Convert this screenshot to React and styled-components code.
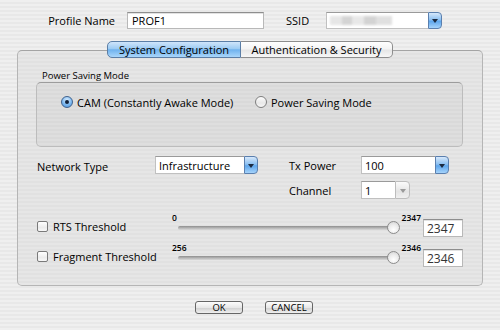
import React from "react";
import styled, { createGlobalStyle, css } from "styled-components";

const FONT = `"Open Sans", "DejaVu Sans", sans-serif`;

const Global = createGlobalStyle`
  html, body { margin: 0; padding: 0; }
  body {
    width: 500px; height: 330px; overflow: hidden;
    font-family: ${FONT};
    font-size: 11px;
    color: #000;
  }
`;

const Window = styled.div`
  width: 500px;
  height: 330px;
  box-sizing: border-box;
  display: flex;
  flex-direction: column;
  background: repeating-linear-gradient(to bottom, #efefef 0 2px, #e8e8e8 2px 4px);
`;

const Header = styled.div`
  display: flex;
  align-items: center;
  height: 17px;
  margin-top: 12px;
  padding-left: 40px;
`;

const Label = styled.span`
  display: inline-block;
  width: ${(p) => p.$w || "auto"};
  margin-left: ${(p) => p.$ml || "0"};
  padding-top: ${(p) => p.$pt || "0"};
  text-align: ${(p) => p.$align || "left"};
  white-space: nowrap;
  font-size: 11px;
  line-height: 14px;
`;

const TextField = styled.div`
  box-sizing: border-box;
  width: ${(p) => p.$w};
  height: ${(p) => p.$h || "17px"};
  margin-left: ${(p) => p.$ml || "0"};
  background: #fff;
  border: 1px solid #b8b8b8;
  border-top-color: #8e8e8e;
  box-shadow: inset 0 1px 0 #e2e2e2;
  display: flex;
  align-items: center;
  padding-left: ${(p) => p.$pl || "4px"};
  font-size: ${(p) => p.$fs || "11px"};
  color: ${(p) => p.$color || "#000"};
`;

const Select = styled.div`
  display: flex;
  width: ${(p) => p.$w};
  height: ${(p) => p.$h || "18px"};
  margin-left: ${(p) => p.$ml || "0"};
  box-sizing: border-box;
`;

const SelectField = styled.div`
  flex: 1;
  box-sizing: border-box;
  background: #fff;
  border: 1px solid #c0c0c0;
  border-right: none;
  border-top-color: #9a9a9a;
  display: flex;
  align-items: center;
  padding-left: 3px;
  font-size: 11px;
`;

const ArrowButton = styled.div`
  width: ${(p) => (p.$disabled ? "15px" : "14px")};
  box-sizing: border-box;
  border-radius: 0 4px 4px 0;
  display: flex;
  align-items: center;
  justify-content: center;
  ${(p) =>
    p.$disabled
      ? css`
          background: linear-gradient(#fbfbfb, #e4e4e4 60%, #f0f0f0);
          border: 1px solid #bdbdbd;
        `
      : css`
          background: linear-gradient(#d6e8fb 0%, #8cc0f1 45%, #5ea6ec 55%, #a5d3fb 100%);
          border: 1px solid #5a7fae;
        `}
  &::after {
    content: "";
    border-left: 3px solid transparent;
    border-right: 3px solid transparent;
    border-top: 4px solid ${(p) => (p.$disabled ? "#9a9a9a" : "#1b2a40")};
    margin-top: 1px;
  }
`;

const Blurred = styled.div`
  width: 62px;
  height: 9px;
  background: linear-gradient(90deg, #e4e4e4 0 20%, #d0d0d0 20% 35%, #e6e6e6 35% 55%, #cfcfcf 55% 75%, #dddddd 75%);
  filter: blur(1px);
  opacity: 0.9;
`;

const TabBar = styled.div`
  display: flex;
  justify-content: center;
  margin-top: 12px;
  height: 17px;
  position: relative;
  z-index: 1;
`;

const Tab = styled.div`
  box-sizing: border-box;
  width: ${(p) => p.$w};
  height: 17px;
  display: flex;
  align-items: center;
  justify-content: center;
  font-size: 11px;
  white-space: nowrap;
  ${(p) =>
    p.$first
      ? css`border-radius: 5px 0 0 5px;`
      : css`border-radius: 0 5px 5px 0; border-left: none !important;`}
  ${(p) =>
    p.$active
      ? css`
          background: linear-gradient(#cfe5fb 0%, #9ccbf3 45%, #6fb2ee 52%, #a9d6fb 100%);
          border: 1px solid #5b7ea6;
        `
      : css`
          background: linear-gradient(#ffffff 0%, #f4f4f4 45%, #e6e6e6 55%, #f7f7f7 100%);
          border: 1px solid #8d8d8d;
        `}
`;

const Panel = styled.div`
  box-sizing: border-box;
  margin: -8px 17px 0 17px;
  height: 236px;
  border: 1px solid #b5b5b5;
  border-top-color: #a4a4a4;
  border-radius: 5px;
  background: repeating-linear-gradient(to bottom, #e6e6e6 0 2px, #e1e1e1 2px 4px);
  padding: 0 19px 0 18px;
  display: flex;
  flex-direction: column;
`;

const GroupLabel = styled.div`
  margin-top: 19px;
  height: 12px;
  line-height: 12px;
  padding-left: 6px;
  font-size: 9.5px;
`;

const GroupBox = styled.div`
  box-sizing: border-box;
  margin-top: 0;
  height: 65px;
  border: 1px solid #bcbcbc;
  border-top-color: #9c9c9c;
  border-radius: 5px;
  background: repeating-linear-gradient(to bottom, #dedede 0 2px, #d9d9d9 2px 4px);
  display: flex;
  align-items: center;
  align-self: stretch;
  padding: 0 0 25px 24px;
`;

const RadioItem = styled.label`
  display: flex;
  align-items: center;
  gap: 4px;
  width: ${(p) => p.$w || "auto"};
  font-size: 11px;
  white-space: nowrap;
`;

const RadioDot = styled.span`
  width: 12px;
  height: 12px;
  border-radius: 50%;
  box-sizing: border-box;
  display: flex;
  align-items: center;
  justify-content: center;
  ${(p) =>
    p.$on
      ? css`
          background: radial-gradient(circle at 50% 30%, #d8ebfd 0%, #7db9f0 55%, #4b8fd9 100%);
          border: 1px solid #40618c;
          &::after {
            content: "";
            width: 4px;
            height: 4px;
            border-radius: 50%;
            background: #10203a;
          }
        `
      : css`
          background: linear-gradient(#fdfdfd, #e8e8e8 60%, #f6f6f6);
          border: 1px solid #7e7e7e;
        `}
`;

const FormRow = styled.div`
  display: flex;
  align-items: center;
  height: 18px;
  margin-top: ${(p) => p.$mt};
  padding-left: 1px;
`;

const ThresholdRow = styled.div`
  display: grid;
  grid-template-columns: 135px 251px 40px;
  height: 28px;
  margin-top: ${(p) => p.$mt};
  padding-left: 1px;
`;

const CheckLabel = styled.label`
  display: flex;
  align-items: center;
  gap: 5px;
  height: 12px;
  margin-top: 7px;
  font-size: 11px;
  white-space: nowrap;
`;

const CheckBox = styled.span`
  width: 11px;
  height: 11px;
  box-sizing: border-box;
  border: 1px solid #7a7a7a;
  border-radius: 2px;
  background: linear-gradient(#ffffff, #ececec 60%, #f8f8f8);
`;

const Slider = styled.div`
  display: flex;
  flex-direction: column;
`;

const SliderLabels = styled.div`
  display: flex;
  justify-content: space-between;
  padding-right: 2px;
  height: 10px;
  font-size: 8.5px;
  font-weight: 600;
  line-height: 10px;
`;

const Track = styled.div`
  position: relative;
  margin-left: 6px;
  width: 218px;
  height: 4px;
  margin-top: 3px;
  border-radius: 2px;
  background: linear-gradient(#8e8e8e, #bdbdbd 60%, #d8d8d8);
`;

const Thumb = styled.div`
  position: absolute;
  left: 209px;
  top: -5px;
  width: 13px;
  height: 13px;
  box-sizing: border-box;
  border-radius: 50%;
  border: 1px solid #8b8b8b;
  background: radial-gradient(circle at 50% 70%, #ffffff 0%, #ececec 50%, #cfcfcf 100%);
`;

const ValueBox = styled(TextField)`
  margin-top: 6px;
  font-size: 12px;
  color: #333;
`;

const ButtonBar = styled.div`
  display: flex;
  justify-content: center;
  gap: 22px;
  margin-top: 15px;
  padding-left: 8px;
`;

const Button = styled.button`
  width: 48px;
  height: 13px;
  padding: 0;
  box-sizing: border-box;
  border: 1px solid #666;
  border-radius: 3px;
  background: linear-gradient(#fdfdfd 0%, #e8e8e8 50%, #d2d2d2 55%, #efefef 100%);
  font-family: ${FONT};
  font-size: 9.5px;
  line-height: 11px;
  color: #000;
  display: flex;
  align-items: center;
  justify-content: center;
`;

function DropDown({ w, ml, value, disabled }) {
  return (
    <Select $w={w} $ml={ml}>
      <SelectField>{value}</SelectField>
      <ArrowButton $disabled={disabled} />
    </Select>
  );
}

function Threshold({ label, min, max, value, mt }) {
  return (
    <ThresholdRow $mt={mt}>
      <CheckLabel>
        <CheckBox />
        {label}
      </CheckLabel>
      <Slider>
        <SliderLabels>
          <span>{min}</span>
          <span>{max}</span>
        </SliderLabels>
        <Track>
          <Thumb />
        </Track>
      </Slider>
      <ValueBox $w="40px" $h="18px" $pl="3px">{value}</ValueBox>
    </ThresholdRow>
  );
}

export default function App() {
  return (
    <>
      <Global />
      <Window>
        <Header>
          <Label $w="75px" $align="right">Profile Name</Label>
          <TextField $w="137px" $ml="12px">PROF1</TextField>
          <Label $ml="22px">SSID</Label>
          <Select $w="116px" $ml="17px" $h="17px">
            <SelectField>
              <Blurred />
            </SelectField>
            <ArrowButton />
          </Select>
        </Header>

        <TabBar>
          <Tab $first $active $w="134px">System Configuration</Tab>
          <Tab $w="152px">Authentication &amp; Security</Tab>
        </TabBar>

        <Panel>
          <GroupLabel>Power Saving Mode</GroupLabel>
          <GroupBox>
            <RadioItem $w="194px">
              <RadioDot $on />
              CAM (Constantly Awake Mode)
            </RadioItem>
            <RadioItem>
              <RadioDot />
              Power Saving Mode
            </RadioItem>
          </GroupBox>

          <FormRow $mt="9px">
            <Label $w="118px" $pt="3px">Network Type</Label>
            <DropDown w="103px" value="Infrastructure" />
            <Label $ml="31px" $w="72px" $pt="2px">Tx Power</Label>
            <DropDown w="88px" value="100" />
          </FormRow>

          <FormRow $mt="7px">
            <Label $ml="252px" $w="72px" $pt="2px">Channel</Label>
            <DropDown w="49px" value="1" disabled />
          </FormRow>

          <Threshold mt="14px" label="RTS Threshold" min="0" max="2347" value="2347" />
          <Threshold mt="2px" label="Fragment Threshold" min="256" max="2346" value="2346" />
        </Panel>

        <ButtonBar>
          <Button>OK</Button>
          <Button>CANCEL</Button>
        </ButtonBar>
      </Window>
    </>
  );
}
